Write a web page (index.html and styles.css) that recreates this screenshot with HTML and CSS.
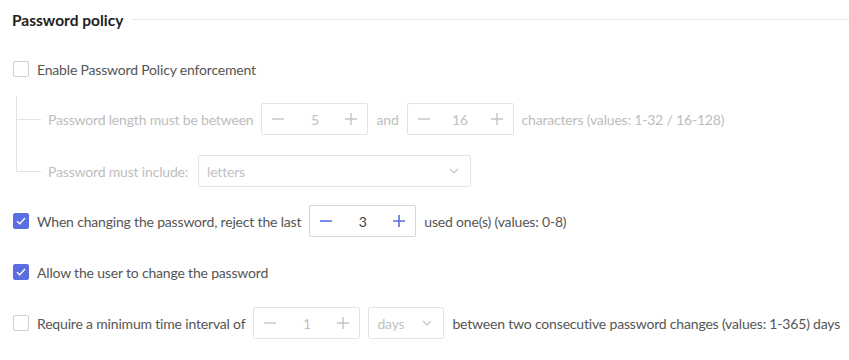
FILE: index.html
```html
<!DOCTYPE html>
<html lang="en">

<head>
    <meta charset="UTF-8">
    <meta name="viewport" content="width=device-width, initial-scale=1.0">
    <title>Password policy</title>
    <link rel="stylesheet" href="styles.css">
</head>

<body>
    <div class="section">
        <div class="section-title">
            <h3>Password policy</h3>
            <span class="rule"></span>
        </div>

        <div class="row row-first">
            <span class="check"></span>
            <span class="label">Enable Password Policy enforcement</span>
        </div>

        <div class="subtree">
            <div class="row sub disabled">
                <span class="label">Password length must be between</span>
                <div class="stepper">
                    <span class="step"><svg width="12" height="12" viewBox="0 0 12 12"><path d="M0 6h12" stroke="currentColor" stroke-width="1.4"/></svg></span>
                    <span class="value">5</span>
                    <span class="step"><svg width="12" height="12" viewBox="0 0 12 12"><path d="M0 6h12M6 0v12" stroke="currentColor" stroke-width="1.4"/></svg></span>
                </div>
                <span class="label">and</span>
                <div class="stepper">
                    <span class="step"><svg width="12" height="12" viewBox="0 0 12 12"><path d="M0 6h12" stroke="currentColor" stroke-width="1.4"/></svg></span>
                    <span class="value">16</span>
                    <span class="step"><svg width="12" height="12" viewBox="0 0 12 12"><path d="M0 6h12M6 0v12" stroke="currentColor" stroke-width="1.4"/></svg></span>
                </div>
                <span class="label">characters (values: 1-32 / 16-128)</span>
            </div>

            <div class="row sub sub-last disabled">
                <span class="label">Password must include:</span>
                <div class="select select-wide">
                    <span>letters</span>
                    <svg width="10" height="6" viewBox="0 0 10 6"><path d="M1 1l4 4 4-4" fill="none" stroke="currentColor" stroke-width="1.2"/></svg>
                </div>
            </div>
        </div>

        <div class="row row-reject">
            <span class="check checked"><svg width="10" height="8" viewBox="0 0 10 8"><path d="M1 4.2l2.8 2.6L9 1" fill="none" stroke="#fff" stroke-width="1.3"/></svg></span>
            <span class="label">When changing the password, reject the last</span>
            <div class="stepper active">
                <span class="step"><svg width="12" height="12" viewBox="0 0 12 12"><path d="M0 6h12" stroke="currentColor" stroke-width="1.6"/></svg></span>
                <span class="value">3</span>
                <span class="step"><svg width="12" height="12" viewBox="0 0 12 12"><path d="M0 6h12M6 0v12" stroke="currentColor" stroke-width="1.6"/></svg></span>
            </div>
            <span class="label">used one(s) (values: 0-8)</span>
        </div>

        <div class="row">
            <span class="check checked"><svg width="10" height="8" viewBox="0 0 10 8"><path d="M1 4.2l2.8 2.6L9 1" fill="none" stroke="#fff" stroke-width="1.3"/></svg></span>
            <span class="label">Allow the user to change the password</span>
        </div>

        <div class="row">
            <span class="check"></span>
            <span class="label">Require a minimum time interval of</span>
            <div class="stepper muted">
                <span class="step"><svg width="12" height="12" viewBox="0 0 12 12"><path d="M0 6h12" stroke="currentColor" stroke-width="1.4"/></svg></span>
                <span class="value">1</span>
                <span class="step"><svg width="12" height="12" viewBox="0 0 12 12"><path d="M0 6h12M6 0v12" stroke="currentColor" stroke-width="1.4"/></svg></span>
            </div>
            <div class="select select-small muted">
                <span>days</span>
                <svg width="10" height="6" viewBox="0 0 10 6"><path d="M1 1l4 4 4-4" fill="none" stroke="currentColor" stroke-width="1.2"/></svg>
            </div>
            <span class="label">between two consecutive password changes (values: 1-365) days</span>
        </div>
    </div>
</body>

</html>
```

FILE: styles.css
```css
* {
    margin: 0;
    padding: 0;
    box-sizing: border-box;
    font-family: 'Lato', 'Open Sans', sans-serif;
}

body {
    background-color: #fff;
    color: #555;
    font-size: 14px;
    letter-spacing: -0.18px;
}

.section {
    padding: 0 0 0 12px;
}

.section-title {
    display: flex;
    align-items: center;
    height: 40px;
}

.section-title h3 {
    font-size: 15.5px;
    font-weight: 700;
    letter-spacing: 0;
    color: #1e1e1e;
    margin-right: 9px;
}

.section-title .rule {
    flex: 1;
    height: 1px;
    background-color: #e6e6e6;
    margin-top: -2px;
}

.row {
    display: flex;
    align-items: center;
    height: 32px;
    margin-top: 19px;
}

.row-first {
    margin-top: 13px;
}

.row-reject {
    margin-top: 18px;
}

.label {
    white-space: nowrap;
}

.row .label + .stepper,
.row .label + .select {
    margin-left: 8px;
}

.stepper + .label,
.select + .label {
    margin-left: 8px;
}

.stepper + .select {
    margin-left: 8px;
}

.check {
    width: 16px;
    height: 16px;
    border: 1px solid #cfcfcf;
    border-radius: 2px;
    margin: 0 8px 0 1px;
    display: flex;
    align-items: center;
    justify-content: center;
    flex-shrink: 0;
}

.check.checked {
    background-color: #5b6ee1;
    border-color: #5b6ee1;
}

/* tree of dependent options */
.subtree {
    position: relative;
    margin-left: 4px;
    padding-top: 18px;
}

.subtree::before {
    content: "";
    position: absolute;
    left: 0;
    top: 11px;
    height: 75px;
    width: 1px;
    background-color: #e2e2e2;
}

.row.sub {
    margin-top: 0;
    padding-left: 32px;
    position: relative;
}

.row.sub::before {
    content: "";
    position: absolute;
    left: 0;
    top: 16px;
    width: 25px;
    height: 1px;
    background-color: #e2e2e2;
}

.row.sub-last {
    margin-top: 20px;
}

.row.sub-last .select {
    margin-left: 10px;
}

.disabled .label {
    color: #bdbdbd;
}

.stepper {
    width: 107px;
    height: 32px;
    border: 1px solid #e3e3e3;
    border-radius: 2px;
    display: flex;
    align-items: center;
    justify-content: space-between;
    padding: 0 10px;
    color: #c4c4c4;
    flex-shrink: 0;
}

.stepper .step {
    display: flex;
}

.stepper .value {
    flex: 1;
    text-align: center;
    color: #c2c2c2;
}

.stepper.active {
    border-color: #d6d6d6;
    color: #5b6ee1;
}

.stepper.active .value {
    color: #444;
}

.select {
    height: 32px;
    border: 1px solid #e3e3e3;
    border-radius: 2px;
    display: flex;
    align-items: center;
    justify-content: space-between;
    padding: 0 11px 0 8px;
    color: #c2c2c2;
    flex-shrink: 0;
}

.select-wide {
    width: 273px;
}

.select-small {
    width: 76px;
}
```
